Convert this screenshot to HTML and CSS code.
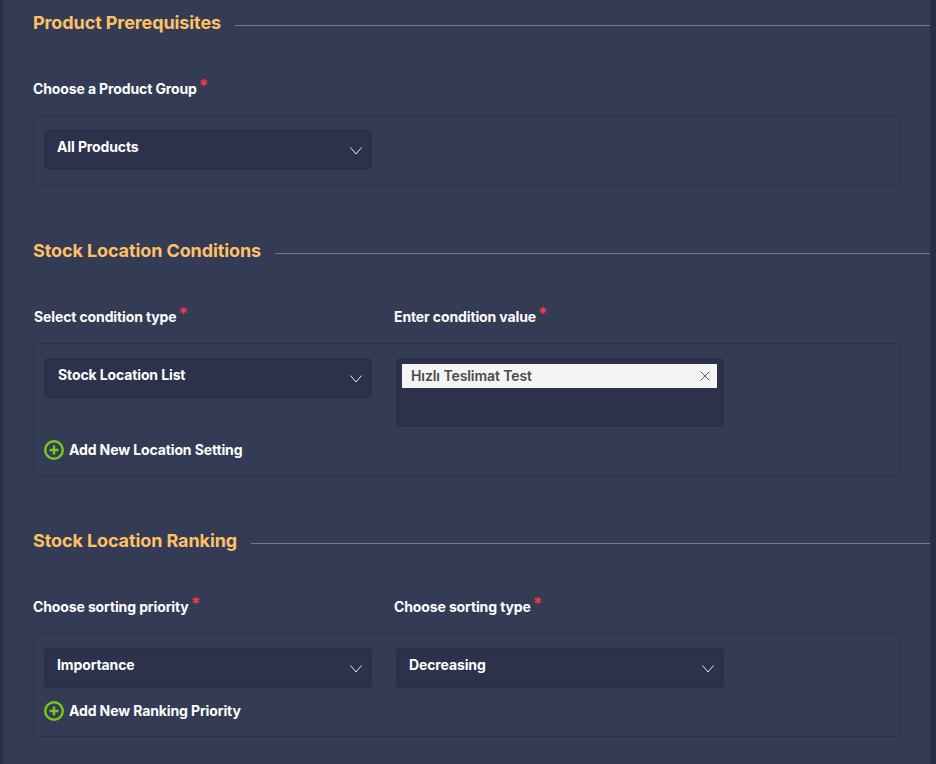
FILE: index.html
```html
<!DOCTYPE html>
<html lang="en">
<head>
<meta charset="utf-8">
<title>Stock Location Rule</title>
<link rel="stylesheet" href="styles.css">
</head>
<body>
<main class="page">
  <section class="section">
    <div class="heading"><h2>Product Prerequisites</h2><span class="rule"></span></div>
    <div class="labels"><label class="label">Choose a Product Group<sup>*</sup></label></div>
    <div class="panel panel-one">
      <div class="row">
        <div class="select"><span>All Products</span><svg class="chev" viewBox="0 0 12 8"><path d="M.5 .5 6 7l5.500-6.500"/></svg></div>
      </div>
    </div>
  </section>
  <section class="section">
    <div class="heading"><h2>Stock Location Conditions</h2><span class="rule"></span></div>
    <div class="labels"><label class="label nudge">Select condition type<sup>*</sup></label><label class="label">Enter condition value<sup>*</sup></label></div>
    <div class="panel panel-two">
      <div class="row">
        <div class="select"><span class="nudge">Stock Location List</span><svg class="chev" viewBox="0 0 12 8"><path d="M.5 .5 6 7l5.500-6.500"/></svg></div>
        <div class="multi"><div class="tag"><span>Hızlı Teslimat Test</span><svg class="close" viewBox="0 0 10 10"><path d="M.5.5l9 9M9.500.5l-9 9"/></svg></div></div>
      </div>
      <div class="add add-over"><svg class="plus" viewBox="0 0 20 20"><circle cx="10" cy="10" r="8.800"/><path d="M10 5.500v9M5.500 10h9"/></svg><span>Add New Location Setting</span></div>
    </div>
  </section>
  <section class="section">
    <div class="heading"><h2>Stock Location Ranking</h2><span class="rule"></span></div>
    <div class="labels"><label class="label">Choose sorting priority<sup>*</sup></label><label class="label">Choose sorting type<sup>*</sup></label></div>
    <div class="panel panel-three">
      <div class="row">
        <div class="select"><span>Importance</span><svg class="chev" viewBox="0 0 12 8"><path d="M.5 .5 6 7l5.500-6.500"/></svg></div>
        <div class="select"><span>Decreasing</span><svg class="chev" viewBox="0 0 12 8"><path d="M.5 .5 6 7l5.500-6.500"/></svg></div>
      </div>
      <div class="add"><svg class="plus" viewBox="0 0 20 20"><circle cx="10" cy="10" r="8.800"/><path d="M10 5.500v9M5.500 10h9"/></svg><span>Add New Ranking Priority</span></div>
    </div>
  </section>
</main>
</body>
</html>
```
FILE: styles.css
```css
html, body {
  margin: 0;
  height: 100%;
  overflow: hidden;
}
body {
  background: #282f44;
  font-family: Inter, "Liberation Sans", sans-serif;
  color: #fff;
}
.page {
  box-sizing: border-box;
  margin: 0 6px 0 3px;
  height: 764px;
  background: #343b55;
  padding: 12px 0 0 30px;
}
.section { margin-bottom: 54px; }
.heading {
  display: flex;
  align-items: center;
  gap: 14px;
  height: 21px;
}
.heading h2 {
  margin: 0 0 1px;
  font-size: 18px;
  font-weight: 700;
  letter-spacing: -0.1px;
  color: #ffc164;
  white-space: nowrap;
}
.rule {
  flex: 1;
  height: 1px;
  background: #76778a;
  margin-top: 6px;
}
.labels {
  display: flex;
  margin-top: 46px;
  height: 36px;
}
.label {
  box-sizing: border-box;
  width: 361px;
  font-size: 14px;
  font-weight: 700;
  letter-spacing: -0.12px;
  line-height: 20px;
  color: #fff;
}
.label sup {
  color: #ee3a45;
  font-size: 17px;
  line-height: 0;
  margin-left: 2px;
  position: relative;
  top: 4px;
}
.nudge { padding-left: 1px; }
.panel {
  box-sizing: border-box;
  width: 867px;
  border: 1px solid #2d334b;
  border-radius: 5px;
  padding: 14px 10px;
}
.panel-one { height: 71px; }
.panel-two { height: 133px; }
.panel-three { height: 104px; }
.row {
  display: flex;
  gap: 24px;
}
.select, .multi {
  box-sizing: border-box;
  width: 328px;
  background: #2c324c;
  border: 2px solid #2a2f47;
  border-radius: 5px;
}
.select {
  height: 40px;
  display: flex;
  align-items: flex-start;
  justify-content: space-between;
  padding: 6px 8px 0 11px;
  font-size: 14px;
  font-weight: 700;
  letter-spacing: -0.12px;
  line-height: 18px;
}
.chev {
  width: 12px;
  height: 8px;
  margin-top: 9px;
  fill: none;
  stroke: #e8e9ee;
  stroke-width: 1;
}
.multi {
  height: 69px;
  padding: 4px 5px 4px 4px;
}
.tag {
  display: flex;
  align-items: center;
  justify-content: space-between;
  box-sizing: border-box;
  height: 24px;
  background: #f4f4f4;
  border-radius: 1px;
  padding: 0 7px 1px 9px;
  color: #4b4b4b;
  font-size: 14px;
  font-weight: 600;
  letter-spacing: -0.08px;
}
.close {
  width: 10px;
  height: 10px;
  fill: none;
  stroke: #5a5a5a;
  stroke-width: 1;
}
.add {
  display: flex;
  align-items: center;
  gap: 5px;
  font-size: 14px;
  font-weight: 700;
  letter-spacing: -0.12px;
  line-height: 20px;
  height: 20px;
  margin-top: 13px;
}
.plus {
  width: 20px;
  height: 20px;
  flex: none;
  fill: none;
  stroke: #78c81e;
  stroke-width: 2.400;
}
```
